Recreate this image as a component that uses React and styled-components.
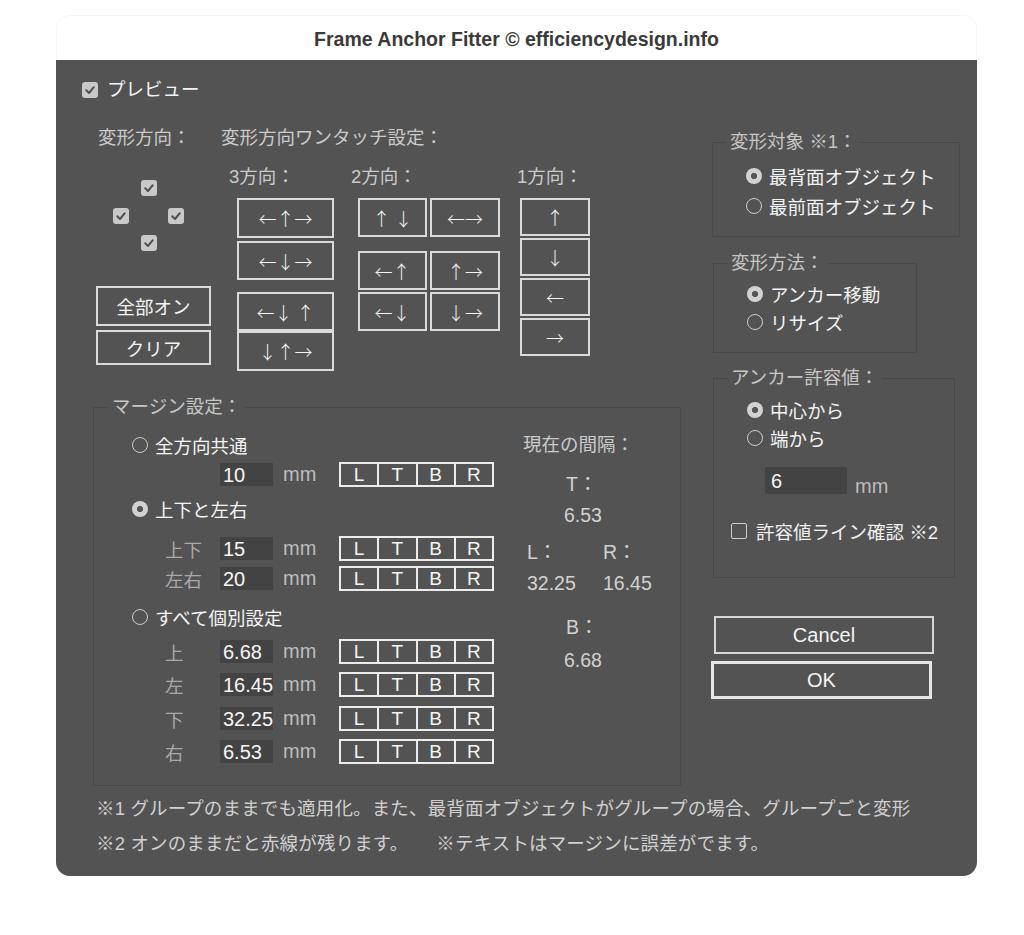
import React from "react";
import styled, { createGlobalStyle } from "styled-components";

const GlobalStyle = createGlobalStyle`
  html, body {
    margin: 0;
    padding: 0;
    background: #ffffff;
  }
  body {
    font-family: "Liberation Sans", "Noto Sans CJK JP", sans-serif;
    font-size: 18.5px;
    color: #f2f2f2;
  }
  * {
    box-sizing: border-box;
  }
`;

const threeWay = [
  { t: "←↑→", h: 40, mt: 0 },
  { t: "←↓→", h: 39, mt: 3 },
  { t: "←↓ ↑", h: 39, mt: 12 },
  { t: "↓↑→", h: 40, mt: 0 },
];

const twoWay = [
  { a: "↑ ↓", b: "←→", mt: 0 },
  { a: "←↑", b: "↑→", mt: 14 },
  { a: "←↓", b: "↓→", mt: 2 },
];

const oneWay = ["↑", "↓", "←", "→"];

const eachRows = [
  { label: "上", value: "6.68", mt: 10 },
  { label: "左", value: "16.45", mt: 8 },
  { label: "下", value: "32.25", mt: 9 },
  { label: "右", value: "6.53", mt: 8 },
];

function Check({ on }) {
  if (!on) return <EmptyBox />;
  return (
    <CheckBoxOn>
      <svg width="16" height="16" viewBox="0 0 16 16">
        <path
          d="M4.2 8.3 L7 11 L11.8 5.2"
          fill="none"
          stroke="#505050"
          strokeWidth="2"
          strokeLinecap="round"
          strokeLinejoin="round"
        />
      </svg>
    </CheckBoxOn>
  );
}

function Radio({ on, children }) {
  return (
    <RadioRow>
      <RadioDot $on={on} />
      <span>{children}</span>
    </RadioRow>
  );
}

function Sides() {
  return (
    <SideBox>
      <SideCell>L</SideCell>
      <SideCell>T</SideCell>
      <SideCell>B</SideCell>
      <SideCell>R</SideCell>
    </SideBox>
  );
}

function InputLine({ label, value, mt }) {
  return (
    <InputRow $mt={mt}>
      <RowLabel>{label}</RowLabel>
      <NumBox>{value}</NumBox>
      <Unit>mm</Unit>
      <Sides />
    </InputRow>
  );
}

export default function App() {
  return (
    <>
      <GlobalStyle />
      <Window>
        <TitleBar>Frame Anchor Fitter © efficiencydesign.info</TitleBar>
        <Panel>
          <PreviewRow>
            <Check on />
            <span>プレビュー</span>
          </PreviewRow>

          <Body>
            <LeftCol>
              <DirRow>
                <DirCol>
                  <SectionLabel>変形方向：</SectionLabel>
                  <CrossGrid>
                    <GridSpot $c={2} $r={1}>
                      <Check on />
                    </GridSpot>
                    <GridSpot $c={1} $r={2}>
                      <Check on />
                    </GridSpot>
                    <GridSpot $c={3} $r={2}>
                      <Check on />
                    </GridSpot>
                    <GridSpot $c={2} $r={3}>
                      <Check on />
                    </GridSpot>
                  </CrossGrid>
                  <CmdButton $h={40} $mt={35}>全部オン</CmdButton>
                  <CmdButton $h={35} $mt={4}>クリア</CmdButton>
                </DirCol>

                <OneTouch>
                  <SectionLabel>変形方向ワンタッチ設定：</SectionLabel>
                  <WayRow>
                    <WayCol $w={122} $ml={8}>
                      <SectionLabel>3方向：</SectionLabel>
                      <WayButtons $ml={10}>
                        {threeWay.map((b) => (
                          <ArrowButton key={b.t} $w={97} $h={b.h} $mt={b.mt}>
                            {b.t}
                          </ArrowButton>
                        ))}
                      </WayButtons>
                    </WayCol>
                    <WayCol $w={166}>
                      <SectionLabel>2方向：</SectionLabel>
                      <WayButtons $ml={9}>
                        {twoWay.map((r) => (
                          <PairRow key={r.a} $mt={r.mt}>
                            <ArrowButton $w={69} $h={39}>
                              {r.a}
                            </ArrowButton>
                            <ArrowButton $w={70} $h={39}>
                              {r.b}
                            </ArrowButton>
                          </PairRow>
                        ))}
                      </WayButtons>
                    </WayCol>
                    <WayCol $w={90}>
                      <SectionLabel>1方向：</SectionLabel>
                      <WayButtons $ml={5}>
                        {oneWay.map((t, i) => (
                          <ArrowButton key={t} $w={70} $h={38} $mt={i ? 2 : 0}>
                            {t}
                          </ArrowButton>
                        ))}
                      </WayButtons>
                    </WayCol>
                  </WayRow>
                </OneTouch>
              </DirRow>

              <Group $w={588} $mt={24}>
                <Legend $ml={14}>マージン設定：</Legend>
                <MarginInner>
                  <MarginLeft>
                    <Radio>全方向共通</Radio>
                    <InputLine label="" value="10" mt={5} />
                    <RadioSpacer $mt={10}>
                      <Radio on>上下と左右</Radio>
                    </RadioSpacer>
                    <InputLine label="上下" value="15" mt={15} />
                    <InputLine label="左右" value="20" mt={5} />
                    <RadioSpacer $mt={14}>
                      <Radio>すべて個別設定</Radio>
                    </RadioSpacer>
                    {eachRows.map((r) => (
                      <InputLine key={r.label} label={r.label} value={r.value} mt={r.mt} />
                    ))}
                  </MarginLeft>

                  <Gaps>
                    <GapsTitle>現在の間隔：</GapsTitle>
                    <GapRow $mt={15}>
                      <GapText $col={2} $pl={2}>T：</GapText>
                    </GapRow>
                    <GapRow $mt={7}>
                      <GapText $col={2}>6.53</GapText>
                    </GapRow>
                    <GapRow $mt={13}>
                      <GapText $col={1}>L：</GapText>
                      <GapText $col={3}>R：</GapText>
                    </GapRow>
                    <GapRow $mt={7}>
                      <GapText $col={1}>32.25</GapText>
                      <GapText $col={3}>16.45</GapText>
                    </GapRow>
                    <GapRow $mt={20}>
                      <GapText $col={2} $pl={2}>B：</GapText>
                    </GapRow>
                    <GapRow $mt={9}>
                      <GapText $col={2}>6.68</GapText>
                    </GapRow>
                  </Gaps>
                </MarginInner>
              </Group>
            </LeftCol>

            <RightCol>
              <Group $w={248} $mt={4} $ml={1}>
                <Legend $ml={13}>変形対象 ※1：</Legend>
                <GroupInner $pt={7} $pb={15}>
                  <Radio on>最背面オブジェクト</Radio>
                  <Radio>最前面オブジェクト</Radio>
                </GroupInner>
              </Group>

              <Group $w={204} $mt={14} $ml={2}>
                <Legend $ml={13}>変形方法：</Legend>
                <GroupInner $pt={5} $pb={16} $tight>
                  <Radio on>アンカー移動</Radio>
                  <Radio>リサイズ</Radio>
                </GroupInner>
              </Group>

              <Group $w={242} $mt={13} $ml={2}>
                <Legend $ml={13}>アンカー許容値：</Legend>
                <GroupInner $pt={6} $pb={34} $tight>
                  <Radio on>中心から</Radio>
                  <Radio>端から</Radio>
                  <ToleranceRow>
                    <ToleranceBox>6</ToleranceBox>
                    <Unit $w={40} $ml={8} $pt={8}>
                      mm
                    </Unit>
                  </ToleranceRow>
                  <LineCheckRow>
                    <Check />
                    <span>許容値ライン確認 ※2</span>
                  </LineCheckRow>
                </GroupInner>
              </Group>

              <DialogButton $mt={38} $ml={3} $w={220}>
                Cancel
              </DialogButton>
              <DialogButton $mt={7} $w={221} $primary>
                OK
              </DialogButton>
            </RightCol>
          </Body>

          <Note $mt={11}>
            ※1 グループのままでも適用化。また、最背面オブジェクトがグループの場合、グループごと変形
          </Note>
          <Note $mt={11}>
            {"※2 オンのままだと赤線が残ります。　　※テキストはマージンに誤差がでます。"}
          </Note>
        </Panel>
      </Window>
    </>
  );
}

const Window = styled.div`
  width: 921px;
  margin: 15px 0 0 56px;
`;

const TitleBar = styled.div`
  height: 45px;
  padding-top: 3px;
  display: flex;
  align-items: center;
  justify-content: center;
  font-family: "Liberation Sans", sans-serif;
  font-weight: 700;
  font-size: 19.5px;
  color: #3a3a3a;
  border-radius: 14px 14px 0 0;
  border: 1px solid #f6f6f6;
  border-bottom: none;
`;

const Panel = styled.div`
  height: 816px;
  background: #535353;
  border-radius: 0 0 14px 14px;
  padding: 21px 0 0 37px;
  display: flex;
  flex-direction: column;
`;

const PreviewRow = styled.div`
  margin-left: -11px;
  height: 18px;
  display: flex;
  align-items: center;
  gap: 9px;
  line-height: 18px;
  color: #f4f4f4;
`;

const CheckBoxOn = styled.span`
  width: 16px;
  height: 16px;
  flex: none;
  display: block;
  border-radius: 3px;
  background: #c9c9c9;
  svg {
    display: block;
  }
`;

const EmptyBox = styled.span`
  width: 16px;
  height: 16px;
  flex: none;
  display: block;
  border-radius: 2px;
  border: 1.5px solid #cdcdcd;
`;

const Body = styled.div`
  margin-top: 27px;
  display: flex;
  align-items: flex-start;
`;

const LeftCol = styled.div`
  width: 588px;
  display: flex;
  flex-direction: column;
`;

const DirRow = styled.div`
  display: flex;
  align-items: flex-start;
`;

const DirCol = styled.div`
  margin-left: 3px;
  width: 115px;
  display: flex;
  flex-direction: column;
`;

const SectionLabel = styled.div`
  line-height: 24px;
  height: 24px;
  padding-left: 2px;
  color: #cacaca;
  white-space: nowrap;
`;

const CrossGrid = styled.div`
  margin: 30px 0 0 17px;
  display: grid;
  grid-template-columns: repeat(3, 16px);
  grid-template-rows: repeat(3, 16px);
  gap: 11.5px;
`;

const GridSpot = styled.div`
  grid-column: ${(p) => p.$c};
  grid-row: ${(p) => p.$r};
`;

const CmdButton = styled.div`
  margin-top: ${(p) => p.$mt}px;
  height: ${(p) => p.$h}px;
  width: 115px;
  border: 2px solid #dadada;
  display: flex;
  align-items: center;
  justify-content: center;
  color: #f4f4f4;
`;

const OneTouch = styled.div`
  margin-left: 8px;
  display: flex;
  flex-direction: column;
`;

const WayRow = styled.div`
  margin-top: 15px;
  display: flex;
`;

const WayCol = styled.div`
  width: ${(p) => p.$w}px;
  margin-left: ${(p) => p.$ml || 0}px;
  display: flex;
  flex-direction: column;
`;

const WayButtons = styled.div`
  margin: 9px 0 0 ${(p) => p.$ml}px;
  display: flex;
  flex-direction: column;
`;

const PairRow = styled.div`
  margin-top: ${(p) => p.$mt}px;
  display: flex;
  gap: 3px;
`;

const ArrowButton = styled.div`
  margin-top: ${(p) => p.$mt || 0}px;
  width: ${(p) => p.$w}px;
  height: ${(p) => p.$h}px;
  border: 2px solid #dadada;
  display: flex;
  align-items: center;
  justify-content: center;
  font-family: "Noto Sans CJK JP", sans-serif;
  font-size: 18px;
  font-weight: 300;
  color: #f4f4f4;
  white-space: pre;
`;

const Group = styled.fieldset`
  margin: ${(p) => p.$mt || 0}px 0 0 ${(p) => p.$ml || 0}px;
  padding: 0;
  width: ${(p) => p.$w}px;
  min-width: 0;
  border: 1px solid #484848;
`;

const Legend = styled.legend`
  margin-left: ${(p) => p.$ml}px;
  padding: 0 4px;
  line-height: 24px;
  color: #c6c6c6;
  white-space: nowrap;
`;

const GroupInner = styled.div`
  padding: ${(p) => p.$pt}px 0 ${(p) => p.$pb}px 33px;
  display: flex;
  flex-direction: column;
  & > div:nth-child(-n + 2) {
    height: ${(p) => (p.$tight ? 28 : 30)}px;
  }
`;

const RadioRow = styled.div`
  height: 24px;
  display: flex;
  align-items: center;
  gap: 7px;
  color: #f4f4f4;
  white-space: nowrap;
`;

const RadioDot = styled.span`
  width: 16px;
  height: 16px;
  flex: none;
  border-radius: 50%;
  ${(p) =>
    p.$on
      ? `background: radial-gradient(circle, #555555 0 2.8px, #d2d2d2 3.4px);`
      : `border: 1.5px solid #cdcdcd;`}
`;

const RadioSpacer = styled.div`
  margin-top: ${(p) => p.$mt}px;
`;

const MarginInner = styled.div`
  padding: 14px 0 21px 38px;
  display: flex;
  align-items: flex-start;
`;

const MarginLeft = styled.div`
  width: 362px;
  display: flex;
  flex-direction: column;
`;

const InputRow = styled.div`
  margin-top: ${(p) => p.$mt}px;
  height: 25px;
  display: flex;
  align-items: center;
`;

const RowLabel = styled.div`
  width: 88px;
  padding-left: 33px;
  color: #a9a9a9;
`;

const NumBox = styled.div`
  width: 53px;
  height: 23px;
  padding-left: 3px;
  background: #434343;
  overflow: hidden;
  white-space: nowrap;
  font-size: 20px;
  line-height: 24px;
  color: #f6f6f6;
`;

const Unit = styled.div`
  width: ${(p) => p.$w || 56}px;
  margin-left: ${(p) => p.$ml || 10}px;
  padding-top: ${(p) => p.$pt || 0}px;
  font-size: 20px;
  color: #bdbdbd;
`;

const SideBox = styled.div`
  width: 155px;
  height: 25px;
  display: flex;
  border: 1px solid #ececec;
`;

const SideCell = styled.div`
  flex: 1;
  display: flex;
  align-items: center;
  justify-content: center;
  border: 1px solid #ececec;
  font-size: 19px;
  color: #f4f4f4;
`;

const Gaps = styled.div`
  margin-left: 29px;
  display: flex;
  flex-direction: column;
`;

const GapsTitle = styled.div`
  line-height: 24px;
  color: #cacaca;
  white-space: nowrap;
`;

const GapRow = styled.div`
  margin-top: ${(p) => p.$mt}px;
  padding-left: 4px;
  height: 24px;
  display: grid;
  grid-template-columns: 37px 39px auto;
  line-height: 24px;
`;

const GapText = styled.span`
  grid-column: ${(p) => p.$col};
  padding-left: ${(p) => p.$pl || 0}px;
  font-size: 19.5px;
  color: #d2d2d2;
  white-space: nowrap;
`;

const RightCol = styled.div`
  margin-left: 30px;
  width: 250px;
  display: flex;
  flex-direction: column;
`;

const ToleranceRow = styled.div`
  margin: 15px 0 0 18px;
  display: flex;
  align-items: flex-start;
`;

const ToleranceBox = styled.div`
  width: 82px;
  height: 27px;
  padding-left: 6px;
  border-radius: 2px;
  background: #434343;
  font-size: 20px;
  line-height: 28px;
  color: #f6f6f6;
`;

const LineCheckRow = styled.div`
  margin: 21px 0 0 -16px;
  height: 24px;
  display: flex;
  align-items: center;
  gap: 9px;
  color: #f0f0f0;
  white-space: nowrap;
`;

const DialogButton = styled.div`
  margin: ${(p) => p.$mt}px 0 0 ${(p) => p.$ml || 0}px;
  width: ${(p) => p.$w}px;
  height: 38px;
  display: flex;
  align-items: center;
  justify-content: center;
  border: ${(p) => (p.$primary ? "3px solid #e6e6e6" : "2px solid #d6d6d6")};
  font-size: 20px;
  color: #f4f4f4;
`;

const Note = styled.div`
  margin: ${(p) => p.$mt}px 0 0 3px;
  line-height: 24px;
  letter-spacing: 0.15px;
  color: #d0d0d0;
  white-space: pre;
`;
